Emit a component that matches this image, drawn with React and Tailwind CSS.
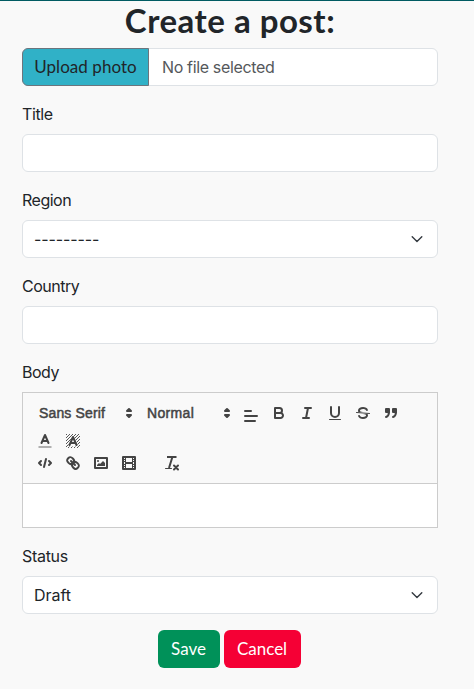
import React from "react";

const strokeIcon = "fill-none stroke-[#444] stroke-2";

function Glyph({ children }) {
  return (
    <span className="flex h-6 w-7 shrink-0 items-center justify-center">
      <svg viewBox="0 0 18 18" className="size-[18px]" strokeLinecap="round" strokeLinejoin="round">
        {children}
      </svg>
    </span>
  );
}

function Picker({ label, className, textClass }) {
  return (
    <div className={`flex h-6 shrink-0 items-center justify-between pr-px pl-2 ${className}`}>
      <span className={`font-['Liberation_Sans',sans-serif] text-[14px] leading-6 font-medium whitespace-nowrap text-[#444] [-webkit-text-stroke:0.5px_#444] ${textClass}`}>
        {label}
      </span>
      <svg viewBox="0 0 18 18" className="size-[18px] fill-[#444] stroke-[#444] stroke-2" strokeLinejoin="round">
        <polygon points="7 11 9 13 11 11 7 11" />
        <polygon points="7 7 9 5 11 7 7 7" />
      </svg>
    </div>
  );
}

function Label({ children, className = "" }) {
  return <label className={`mb-2 -ml-px block h-6 pl-px text-base leading-6 ${className}`}>{children}</label>;
}

function Select({ children, className = "" }) {
  return (
    <div className="mb-4 flex h-[38px] items-center justify-between rounded-md border border-[#dee2e6] bg-white pr-3 pl-[11px]">
      <span className={className}>{children}</span>
      <svg viewBox="0 0 16 16" className="size-4 fill-none stroke-[#343a40] stroke-[1.4]" strokeLinecap="round" strokeLinejoin="round">
        <path d="m3.2 5.8 4.8 4.8 4.8-4.8" />
      </svg>
    </div>
  );
}

const dots = [];
for (let k = -16; k <= 16; k += 3) dots.push(k);

function Editor() {
  return (
    <div className="mb-4 h-[136px] border border-[#ccc]">
      <div className="h-[91px] border-b border-[#ccc] p-2">
        <div className="flex h-6">
          <Picker label="Sans Serif" className="w-[108px]" textClass="tracking-[0.15px]" />
          <Picker label="Normal" className="w-[98px]" textClass="tracking-[0.35px]" />
          <span className="mt-[3px] flex">
            <Glyph>
              <g className={strokeIcon}>
                <path d="M3 9H15M3 14H13M3 4H9" />
              </g>
            </Glyph>
          </span>
          <Glyph>
            <g className={strokeIcon}>
              <path d="M5 4H9.5A2.5 2.5 0 0 1 12 6.5A2.5 2.5 0 0 1 9.5 9H5V4Z" />
              <path d="M5 9H10.5A2.5 2.5 0 0 1 13 11.5A2.5 2.5 0 0 1 10.5 14H5V9Z" />
            </g>
          </Glyph>
          <Glyph>
            <path className={strokeIcon} d="M7 4H13M5 14H11M8 14 10 4" />
          </Glyph>
          <Glyph>
            <path className={strokeIcon} d="M5 3V9A4.012 4.012 0 0 0 9 13H9A4.012 4.012 0 0 0 13 9V3" />
            <rect className="fill-[#444]" height="1" rx="0.5" width="12" x="3" y="15" />
          </Glyph>
          <Glyph>
            <path className="fill-none stroke-[#444] stroke-1" d="M2.5 8.5 15.5 9.5" />
            <path className="fill-[#444]" d="M9.007 8C6.542 7.791 6 7.519 6 6.5 6 5.792 7.283 5 9 5c1.571 0 2.765.679 2.969 1.309a1 1 0 0 0 1.9-.617C13.356 4.106 11.354 3 9 3 6.2 3 4 4.538 4 6.5a3.2 3.2 0 0 0 .5 1.843Z" />
            <path className="fill-[#444]" d="M8.984 10C11.457 10.208 12 10.479 12 11.5c0 .708-1.283 1.5-3 1.5-1.571 0-2.765-.679-2.969-1.309a1 1 0 1 0-1.9.617C4.644 13.894 6.646 15 9 15c2.8 0 5-1.538 5-3.5a3.2 3.2 0 0 0-.5-1.843Z" />
          </Glyph>
          <Glyph>
            <g className="fill-[#444] stroke-[#444] stroke-2">
              <rect height="3" width="3" x="4" y="5" />
              <rect height="3" width="3" x="11" y="5" />
            </g>
            <path className="fill-none stroke-[#444] stroke-2" d="M7 8c0 4.031-3 5-3 5M14 8c0 4.031-3 5-3 5" />
          </Glyph>
        </div>
        <div className="flex h-[26px] pt-1">
          <Glyph>
            <path className="fill-none stroke-[#444] stroke-2 opacity-40" d="M2.5 15H15.5" strokeLinecap="butt" />
            <path className={strokeIcon} d="M5.5 11 9 3 12.5 11M6.37 9H11.63" />
          </Glyph>
          <Glyph>
            <clipPath id="shade">
              <path clipRule="evenodd" d="M2 2H16V16H2ZM9 3.2 3.6 14.5H14.4Z" />
            </clipPath>
            <g clipPath="url(#shade)" className="fill-none stroke-[#444] stroke-[0.9]">
              {dots.map((k) => (
                <path key={k} d={`M${k} 18 ${k + 18} 0`} />
              ))}
            </g>
            <path className="fill-none stroke-[#444] stroke-2" d="M5.5 13 9 5 12.5 13M6.38 11H11.62" />
          </Glyph>
        </div>
        <div className="flex h-6">
          <Glyph>
            <path className={strokeIcon} d="M5 7 3 9 5 11M13 7 15 9 13 11M10 5 8 13" />
          </Glyph>
          <Glyph>
            <path className={strokeIcon} d="M7 7 11 11" />
            <path className={strokeIcon} d="M8.9 4.577a3.476 3.476 0 0 1 .36 4.679A3.476 3.476 0 0 1 4.577 8.9C3.185 7.5 2.035 6.4 4.217 4.217S7.5 3.185 8.9 4.577Z" />
            <path className={strokeIcon} d="M13.423 9.1a3.476 3.476 0 0 0-4.679-.36 3.476 3.476 0 0 0 .36 4.679c1.392 1.392 2.5 2.542 4.679.36s1.031-3.287-.36-4.679Z" />
          </Glyph>
          <Glyph>
            <rect className={strokeIcon} height="10" width="12" x="3" y="4" />
            <circle className="fill-[#444]" cx="6" cy="7" r="1" />
            <polyline className="fill-[#444]" points="5 12 5 11 7 9 8 10 11 7 13 9 13 12 5 12" />
          </Glyph>
          <Glyph>
            <rect className={strokeIcon} height="12" width="12" x="3" y="3" />
            <g className="fill-[#444]">
              <rect height="12" width="1" x="5" y="3" />
              <rect height="12" width="1" x="12" y="3" />
              <rect height="2" width="8" x="5" y="8" />
              <rect height="1" width="3" x="3" y="5" />
              <rect height="1" width="3" x="3" y="7" />
              <rect height="1" width="3" x="3" y="10" />
              <rect height="1" width="3" x="3" y="12" />
              <rect height="1" width="3" x="12" y="5" />
              <rect height="1" width="3" x="12" y="7" />
              <rect height="1" width="3" x="12" y="10" />
              <rect height="1" width="3" x="12" y="12" />
            </g>
          </Glyph>
          <span className="ml-[15px] flex">
            <Glyph>
              <path className="fill-none stroke-[#444] stroke-2" strokeLinecap="butt" d="M4 3H13.5M6 14 9.4 3" />
              <path className="fill-none stroke-[#444] stroke-2" d="M11 11.5 15 15.5M15 11.5 11 15.5" />
              <rect className="fill-[#444]" height="1" rx="0.5" width="7" x="2" y="14" />
            </Glyph>
          </span>
        </div>
      </div>
      <div className="h-[43px] bg-white" />
    </div>
  );
}

export default function App() {
  return (
    <div className="h-[689px] overflow-hidden border-t border-[#005b62] bg-[#f9f9f9] pr-9 pl-[22px] font-['Inter',sans-serif] text-[#212529]">
      <h1 className="mb-[7px] flex h-10 items-center justify-center pb-[3px] font-['Lato',sans-serif] text-[33px] leading-10 font-bold tracking-[0.5px] whitespace-nowrap">
        Create a post:
      </h1>
      <div className="mb-4 flex h-[38px] rounded-md border border-[#dee2e6] bg-white leading-9">
        <button className="-my-px -ml-px h-[38px] w-[127px] shrink-0 rounded-l-md border border-[#6c757d] bg-[#30b1c7] text-center font-['Lato',sans-serif] text-[17px] leading-[34px] tracking-[0.05px] whitespace-nowrap">
          Upload photo
        </button>
        <span className="ml-[13px] tracking-[-0.35px] text-[#55585b]">No file selected</span>
      </div>
      <Label className="tracking-[-0.4px]">Title</Label>
      <div className="mb-4 h-[38px] rounded-md border border-[#dee2e6] bg-white" />
      <Label className="tracking-[-0.5px]">Region</Label>
      <Select className="tracking-[-0.1px]">---------</Select>
      <Label className="tracking-[-0.5px]">Country</Label>
      <div className="mb-4 h-[38px] rounded-md border border-[#dee2e6] bg-white" />
      <Label className="tracking-[-0.5px]">Body</Label>
      <Editor />
      <Label className="tracking-[-0.3px]">Status</Label>
      <Select className="tracking-[-0.05px]">Draft</Select>
      <div className="flex justify-center gap-1 pr-[2px] font-['Lato',sans-serif] text-[17px] text-white">
        <button className="h-[38px] w-[62px] rounded-md bg-[#009159] pb-px">Save</button>
        <button className="h-[38px] w-[77px] rounded-md bg-[#f50035] pb-px">Cancel</button>
      </div>
    </div>
  );
}
